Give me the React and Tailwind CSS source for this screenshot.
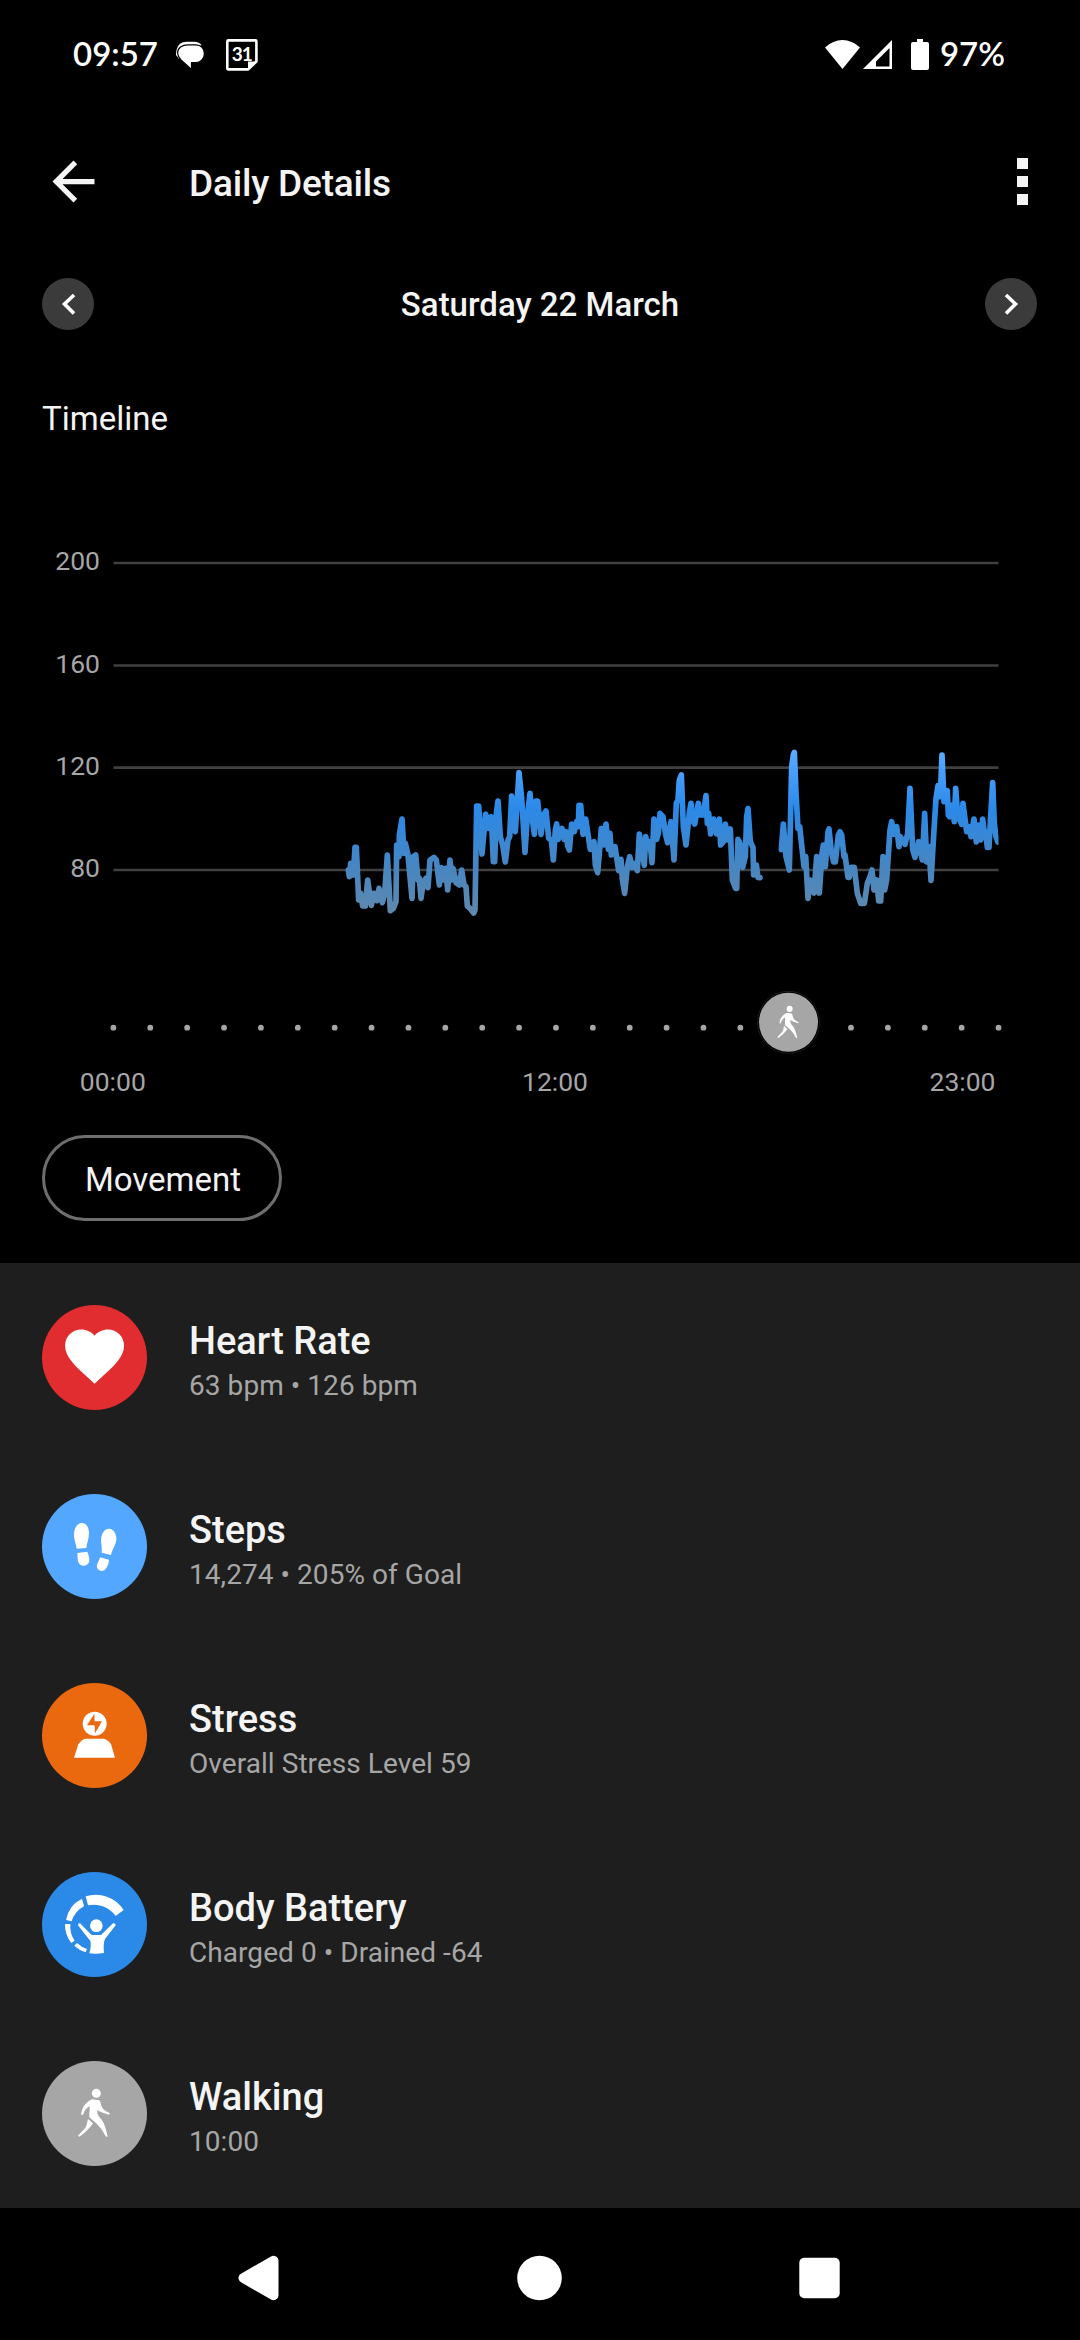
const PRIMARY = '#f4f4f4';
const MUTED = '#a6a6a6';

// Traces are stored in thirds of a pixel, relative to their own origin.
const HEART_RATE_TRACES = [
  {
    x: 330,
    points:
      '55,450 58,470 62,430 70,465 75,382 79,382 86,540 92,520 98,558 106,558 113,480 124,556 132,520 141,542 147,505 157,548 164,520 172,405 181,572 190,565 198,545 200,375 207,410 208,345 216,297 222,400 226,370 234,405 246,535 250,410 257,405 264,480 268,475 273,535 280,485 288,475 294,503 300,420 312,412 319,420 328,495 334,443 341,480 347,445 353,510 360,420 366,480 369,445 378,488 388,495 395,450 402,495 408,500 412,558 420,565 431,579 435,570 440,258 446,258 456,402 467,282 476,325 484,290 490,425 494,425 499,280 504,243 511,350 518,375 526,426 534,360 539,350 545,228 556,335 567,158 575,235 585,397 592,290 600,220 606,290 613,343 618,243 623,243 633,343 640,285 648,273 656,355 664,360 670,420 676,330 680,312 685,358 696,325 703,358 708,335 713,378 718,390 725,312 733,335 740,305 745,320 747,256 752,256 759,343 767,297 772,330 781,388 792,365 796,435 803,458 808,400 814,325 822,375 828,312 835,388 840,340 844,405 855,380 866,452 873,418 877,478 884,520 892,440 899,410 906,442 912,430 922,452 928,342 935,390 943,436 947,350 954,380 960,365 966,428 972,297 980,358 985,340 990,280 999,290 1007,345 1013,368 1018,330 1023,305 1032,420 1039,250 1044,240 1048,180 1054,165 1060,320 1068,375 1078,280 1083,250 1088,300 1094,312 1105,250 1110,285 1120,285 1128,227 1132,310 1136,280 1142,342 1151,297 1160,342 1168,297 1172,375 1180,365 1186,312 1193,360 1201,327 1207,480 1217,505 1220,505 1224,358 1232,375 1238,442 1246,410 1250,290 1254,266 1261,365 1269,382 1271,465 1279,435 1284,472 1290,473',
  },
  {
    x: 770,
    points:
      '34,389 40,312 48,410 58,450 65,140 70,105 73,97 78,220 84,325 89,320 102,440 107,410 114,535 121,480 132,519 140,410 148,519 156,400 160,375 166,440 174,335 177,327 184,395 191,426 196,426 205,345 210,335 215,345 222,410 225,405 234,472 238,472 243,442 253,442 262,520 272,550 283,550 292,490 300,470 306,450 312,510 320,480 326,543 332,543 339,410 344,510 350,480 360,330 365,305 371,343 380,320 387,380 391,350 405,373 413,340 420,205 428,388 435,412 446,365 457,420 464,280 470,426 477,380 483,481 492,330 498,235 504,197 511,230 516,105 522,245 532,212 535,285 539,290 548,255 553,305 557,205 563,285 575,313 579,250 590,335 598,320 603,350 612,297 619,366 625,315 632,360 638,297 643,340 647,335 652,382 657,382 662,290 668,188 673,310 678,350 684,366',
  },
];

const GRID_LINES = [
  { label: '200', y: 563 },
  { label: '160', y: 665.5 },
  { label: '120', y: 767.7 },
  { label: '80', y: 870 },
];

const HeartShape = () => (
  <path
    transform="translate(51.5 47) scale(8.85)"
    d="M12 21.35l-1.45-1.32C5.4 15.36 2 12.28 2 8.5 2 5.42 4.42 3 7.5 3c1.74 0 3.41.81 4.5 2.09C13.09 3.81 14.76 3 16.5 3 19.58 3 22 5.42 22 8.5c0 3.78-3.4 6.86-8.55 11.54L12 21.35z"
  />
);

const StepsShape = () => (
  <>
    <path d="M118 87C132 86 141 100 141 116C141 135 134 148 133 162L104 164C103 150 96 140 96 122C96 103 104 89 118 87Z" />
    <path d="M106 177L136 173C139 182 142 190 142 198C142 208 135 215 125 215C112 215 108 205 107 195Z" />
    <path d="M202 104C215 105 223 118 223 135C223 150 211 165 207 183L179 176C181 160 177 150 177 138C178 118 187 104 202 104Z" />
    <path d="M174 190L201 197C201 205 198 214 193 222C188 230 180 233 172 229C164 225 163 217 166 210C169 203 172 198 174 190Z" />
  </>
);

const StressShape = () => (
  <>
    <circle cx="158" cy="122" r="36" />
    <path fill="#eb690e" d="M157 92L135 127H158L159 151L180 115H158Z" />
    <path d="M96 224L109 184Q120 167 134 167H185Q199 170 207 184L219 224Z" />
  </>
);

const BodyBatteryShape = () => (
  <>
    <path d="M131 73A100 100 0 0 1 245 114L221 132A80 80 0 0 0 138 100Z" />
    <path d="M120 80A88 88 0 0 0 72 144L89 148A75 75 0 0 1 126 103Z" />
    <path d="M69 156A88 88 0 0 0 88 213L98 206A76 76 0 0 1 85 156Z" />
    <path d="M97 221A88 88 0 0 0 131 241L135 231A76 76 0 0 1 105 213Z" />
    <circle cx="163" cy="161" r="19" />
    <path d="M109 161Q107 154 114 154L149 189H177L213 154Q221 153 221 160L189 201Q183 215 186 243Q163 247 142 244Q149 220 145 207Z" />
  </>
);

const WalkingShape = () => (
  <>
    <circle cx="163" cy="97" r="13.5" />
    <path d="M117 161L123 161C128 148 134 140 143 136C144 146 141 158 142 169C152 177 164 188 171 196C180 206 186 218 192 227L197 227C194 212 188 188 178 175C172 167 165 163 166 150L165 147C176 154 190 158 201 161L204 157C194 152 184 147 180 139C176 130 176 122 172 118L150 115C138 120 129 130 124 138C120 146 118 153 117 161Z" />
    <path d="M138 174L153 187C145 200 130 215 112 227L108 224C118 212 130 203 133 194C136 186 136 180 138 174Z" />
  </>
);

const METRICS = [
  { title: 'Heart Rate', detail: '63 bpm • 126 bpm', color: 'bg-[#e12d2f]', Shape: HeartShape },
  { title: 'Steps', detail: '14,274 • 205% of Goal', color: 'bg-[#54a7ff]', Shape: StepsShape },
  { title: 'Stress', detail: 'Overall Stress Level 59', color: 'bg-[#eb690e]', Shape: StressShape },
  { title: 'Body Battery', detail: 'Charged 0 • Drained -64', color: 'bg-[#2b8ae8]', Shape: BodyBatteryShape },
  { title: 'Walking', detail: '10:00', color: 'bg-[#a6a6a6]', Shape: WalkingShape },
];

const StatusBar = () => (
  <div className="flex h-[110px] items-center justify-between pr-[75px] pl-[73px] font-[Lato,sans-serif] text-[33px] font-semibold text-white">
    <div className="flex items-center">
      <span className="w-[102px] pb-[3px] leading-none">09:57</span>
      <svg className="h-[30px] w-[30px]" viewBox="175 41 30 30">
        <path fill="#fff" d="M176 56C176 47 180 42.7 187 42.7H194C198 42.7 200 44 201.5 46L179 60Z" />
        <path
          fill="#fff"
          stroke="#000"
          strokeWidth="1.2"
          d="M188 45.8H196C201 45.8 204.4 50 204.4 54.5C204.4 60 200 63.6 196 63.6H191.5V70.5L181 61C179 59 177.6 57 177.6 54C177.6 49 182 45.8 188 45.8Z"
        />
      </svg>
      <svg className="ml-5 h-[34px] w-[34px]" viewBox="0 0 34 34">
        <path fill="none" stroke="#fff" strokeWidth="2.6" strokeLinejoin="round" d="M3.4 2.4H30.4Q31.4 2.4 31.4 3.4V23.5L23.2 31.4H3.4Q2.3 31.4 2.3 30.3V3.4Q2.3 2.4 3.4 2.4Z" />
        <path fill="#fff" d="M23 31V23.5H31Z" />
        <text x="16.8" y="23" textAnchor="middle" fill="#fff" fontSize="19" fontWeight="700" letterSpacing="-1">31</text>
      </svg>
    </div>
    <div className="flex items-center">
      <svg className="h-[32px] w-[106px]" viewBox="824 38 106 32" fill="#fff">
        <path d="M842.5 68L825 46.5Q833 39 842.5 39T860 46.5Z" />
        <path fillRule="evenodd" d="M863 68L892 39V68ZM876 65.5H889.5V47L876 60.5Z" />
        <path d="M917 38H923V41H927Q929 41 929 43V67Q929 69 927 69H913Q911 69 911 67V43Q911 41 913 41H917Z" />
      </svg>
      <span className="ml-[10px] pb-[3px] leading-none">97%</span>
    </div>
  </div>
);

const AppBar = () => (
  <header className="flex h-[146px] items-center pr-[52px] pb-[3px] pl-[42px]">
    <svg className="h-[63px] w-[63px]" viewBox="0 0 24 24" fill={PRIMARY}>
      <path d="M20 11H7.83l5.59-5.59L12 4l-8 8 8 8 1.41-1.41L7.83 13H20v-2z" />
    </svg>
    <h1 className="ml-[84px] flex-1 pt-[3px] text-[37px] leading-none font-medium tracking-[-0.2px]">
      Daily Details
    </h1>
    <div className="flex flex-col gap-[7px]">
      <span className="size-[11px] bg-[#f4f4f4]" />
      <span className="size-[11px] bg-[#f4f4f4]" />
      <span className="size-[11px] bg-[#f4f4f4]" />
    </div>
  </header>
);

const RoundButton = ({ d }) => (
  <button className="flex size-[52px] items-center justify-center rounded-full bg-[#3b3b3b]">
    <svg className="size-[52px]" viewBox="0 0 52 52" fill="none" stroke="#fff" strokeWidth="3.6">
      <path d={d} />
    </svg>
  </button>
);

const DateNav = () => (
  <div className="flex h-24 items-center justify-between pr-[43px] pl-[42px]">
    <RoundButton d="M32 17L22.5 26L32 35.5" />
    <span className="pl-px text-[33px] leading-none font-medium">Saturday 22 March</span>
    <RoundButton d="M21 17L30.5 26L21 35.5" />
  </div>
);

const TimelineChart = () => (
  <svg className="block h-[620px] w-full" viewBox="0 500 1080 620">
    <defs>
      <linearGradient id="hr" gradientUnits="userSpaceOnUse" x1="0" y1="80" x2="0" y2="580">
        <stop offset="0" stopColor="#5cb2ff" />
        <stop offset="0.08" stopColor="#52a5ff" />
        <stop offset="0.37" stopColor="#2b89e8" />
        <stop offset="0.74" stopColor="#4886c0" />
        <stop offset="1" stopColor="#5f89ae" />
      </linearGradient>
      <clipPath id="plot">
        <rect x="113" y="500" width="885.5" height="420" />
      </clipPath>
    </defs>

    {GRID_LINES.map(({ label, y }) => (
      <g key={label}>
        <line x1="113.5" x2="998.5" y1={y} y2={y} stroke="#404040" strokeWidth="2.7" />
        <text x="100" y={y + 7.3} textAnchor="end" fontSize="26.5" fill={MUTED}>{label}</text>
      </g>
    ))}

    <g clipPath="url(#plot)">
      {HEART_RATE_TRACES.map(({ x, points }) => (
        <polyline
          key={x}
          transform={`translate(${x} 720) scale(0.33333)`}
          points={points}
          fill="none"
          stroke="url(#hr)"
          strokeWidth="17"
          strokeLinecap="round"
          strokeLinejoin="round"
        />
      ))}
    </g>

    {Array.from({ length: 25 }, (_, hour) => (
      <circle key={hour} cx={113.4 + hour * 36.88} cy="1027.7" r="2.9" fill={MUTED} />
    ))}
    <circle cx="788.5" cy="1022.3" r="31" fill="#000" stroke="#1c1c1c" strokeWidth="1" />
    <circle cx="788.5" cy="1022.3" r="29.5" fill={MUTED} />
    <g transform="translate(753.2 987.2) scale(0.2235)" fill="#fff">
      <WalkingShape />
    </g>

    <g fontSize="26.5" fill={MUTED}>
      <text x="112.8" y="1090.7" textAnchor="middle">00:00</text>
      <text x="555" y="1090.7" textAnchor="middle">12:00</text>
      <text x="995.5" y="1090.7" textAnchor="end">23:00</text>
    </g>
  </svg>
);

const MetricRow = ({ title, detail, color, Shape }) => (
  <li className="flex h-[189px] pt-[42px] pl-[42px]">
    <div className={`size-[105px] rounded-full ${color}`}>
      <svg className="size-[105px]" viewBox="0 0 315 315" fill="#fff">
        <Shape />
      </svg>
    </div>
    <div className="ml-[42px] pt-[13px]">
      <div className="text-[38px] leading-[46px] font-medium">{title}</div>
      <div className="text-[28px] leading-[44px] tracking-[0.06px] text-[#a6a6a6]">{detail}</div>
    </div>
  </li>
);

const NavBar = () => (
  <nav className="flex h-[132px] items-center justify-center pt-[7px]">
    <svg className="h-[50px] w-[620px]" viewBox="230 2252.5 620 50" fill="#fff">
      <path
        stroke="#fff"
        strokeWidth="10"
        strokeLinejoin="round"
        d="M243.5 2277.5L273.5 2260.3V2294.7Z"
      />
      <circle cx="539.5" cy="2277.5" r="22.3" />
      <rect x="799.3" y="2257.3" width="40.4" height="40.4" rx="5" />
    </svg>
  </nav>
);

export default function App() {
  return (
    <div className="flex h-[2340px] w-[1080px] flex-col overflow-hidden bg-black font-[Roboto,sans-serif] text-[#f4f4f4]">
      <StatusBar />
      <AppBar />
      <DateNav />
      <section className="h-[911px]">
        <h2 className="h-[148px] pt-[50px] pl-[42px] text-[33px] leading-[34px]">Timeline</h2>
        <TimelineChart />
        <button className="mt-[15px] ml-[42px] flex h-[86px] w-[240px] items-center justify-center rounded-full border-3 border-[#6e6e6e] pt-[3px] pl-[2px] text-[33px]">
          Movement
        </button>
      </section>
      <ul className="bg-[#1e1e1e]">
        {METRICS.map((metric) => (
          <MetricRow key={metric.title} {...metric} />
        ))}
      </ul>
      <NavBar />
    </div>
  );
}
